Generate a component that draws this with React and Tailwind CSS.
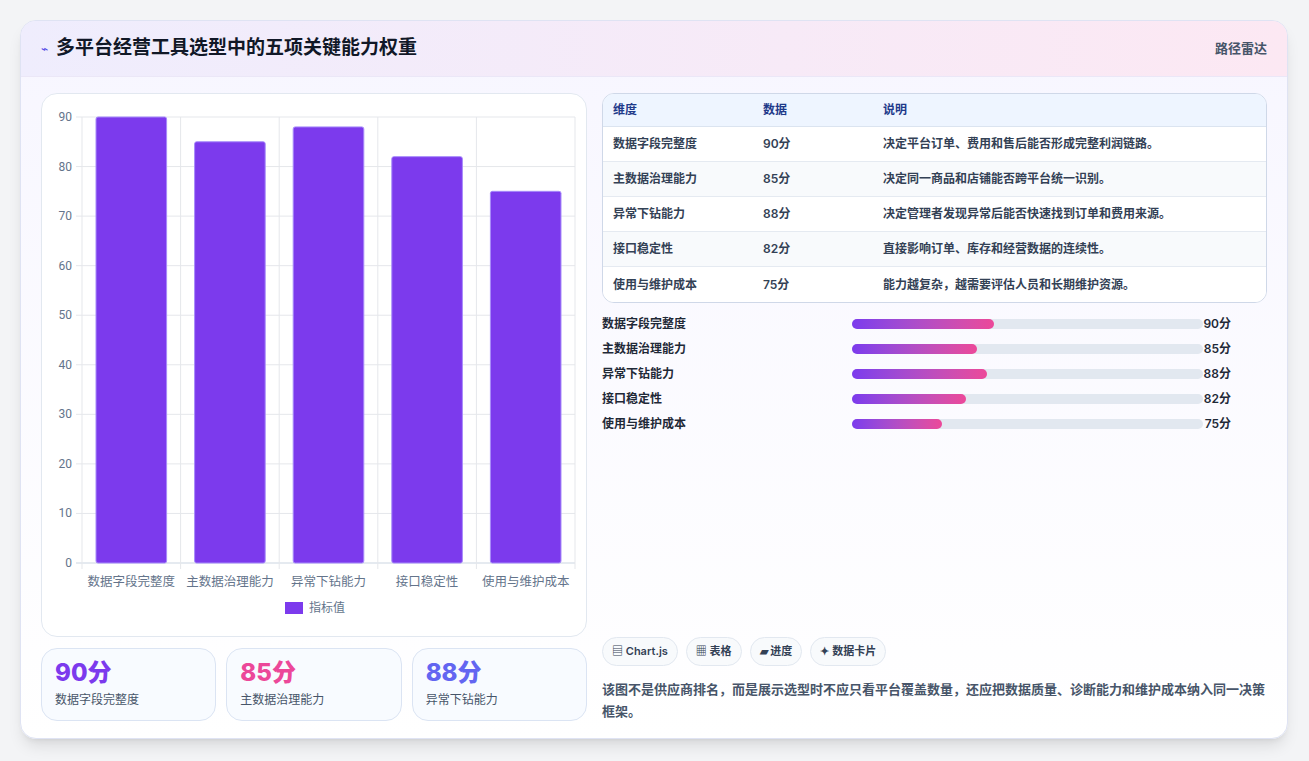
const rows = [
  ['数据字段完整度', 90, '决定平台订单、费用和售后能否形成完整利润链路。'],
  ['主数据治理能力', 85, '决定同一商品和店铺能否跨平台统一识别。'],
  ['异常下钻能力', 88, '决定管理者发现异常后能否快速找到订单和费用来源。'],
  ['接口稳定性', 82, '直接影响订单、库存和经营数据的连续性。'],
  ['使用与维护成本', 75, '能力越复杂，越需要评估人员和长期维护资源。'],
];

function Chart() {
  const x0 = 40, x1 = 533, y0 = 23, y1 = 469;
  const cw = (x1 - x0) / 5;
  const sy = v => y1 - (v / 90) * (y1 - y0);
  return (
    <svg width="546" height="543" className="block" style={{ fontFamily: 'Roboto, "Noto Sans CJK SC", sans-serif' }}>
      {[0, 10, 20, 30, 40, 50, 60, 70, 80, 90].map(t => (
        <g key={t}>
          <line x1={x0 - 6} x2={x1} y1={sy(t)} y2={sy(t)} stroke={t === 0 ? '#cbd5e1' : '#e5e7eb'} />
          <text x={x0 - 10} y={sy(t) + 4} textAnchor="end" fontSize="12" fill="#64748b">{t}</text>
        </g>
      ))}
      {[0, 1, 2, 3, 4, 5].map(i => (
        <line key={i} x1={x0 + i * cw} x2={x0 + i * cw} y1={y0} y2={y1 + 6} stroke="#e5e7eb" />
      ))}
      {rows.map((r, i) => (
        <g key={r[0]}>
          <rect x={x0 + i * cw + 14} y={sy(r[1])} width={cw - 28} height={y1 - sy(r[1])} rx="2" fill="#7c3aed" stroke="#a78bfa" strokeWidth="1" />
          <text x={x0 + i * cw + cw / 2} y={y1 + 23} textAnchor="middle" fontSize="12.5" fill="#64748b">{r[0]}</text>
        </g>
      ))}
      <rect x="243" y="508" width="18" height="12" fill="#7c3aed" />
      <text x="267" y="518" fontSize="12" fill="#64748b">指标值</text>
    </svg>
  );
}

export default function App() {
  return (
    <div className="min-h-screen bg-[#f3f4f6] p-5" style={{ fontFamily: 'Inter, "Noto Sans CJK SC", sans-serif' }}>
      <div className="w-[1268px] h-[719px] rounded-2xl border border-[#dfe3f3] bg-gradient-to-b from-[#f7f6ff] to-white shadow-lg overflow-hidden flex flex-col">
        <div className="h-[56px] flex items-center justify-between px-5 border-b border-[#ebe7f7] bg-gradient-to-r from-[#efedfd] to-[#fce8f3]">
          <div className="flex items-center gap-2">
            <span className="text-[#4f46e5] text-xs">⌁</span>
            <h1 className="text-[19px] font-bold text-[#111827]">多平台经营工具选型中的五项关键能力权重</h1>
          </div>
          <span className="text-[13px] font-semibold text-[#475569]">路径雷达</span>
        </div>
        <div className="flex gap-[15px] px-5 pt-4 pb-4 flex-1">
          <div className="w-[546px] flex flex-col gap-[11px]">
            <div className="h-[544px] rounded-2xl border border-[#e2e8f0] bg-white"><Chart /></div>
            <div className="grid grid-cols-3 gap-[10px]">
              {[['90分', 'text-[#7c3aed]', '数据字段完整度'], ['85分', 'text-[#ec4899]', '主数据治理能力'], ['88分', 'text-[#6366f1]', '异常下钻能力']].map(c => (
                <div key={c[2]} className="h-[73px] rounded-2xl border border-[#dbe4f3] bg-[#f8fbff] px-[13px] pt-2">
                  <div className={`text-[24px] font-extrabold leading-[32px] ${c[1]}`}>{c[0]}</div>
                  <div className="text-[12px] text-[#475569] mt-[2px]">{c[2]}</div>
                </div>
              ))}
            </div>
          </div>
          <div className="flex-1 flex flex-col">
            <div className="rounded-xl border border-[#cfd8e8] overflow-hidden bg-white">
              <div className="h-[33px] flex items-center bg-[#eef5ff] text-[12px] font-bold text-[#1e3a8a] border-b border-[#dbe4f0]">
                <span className="w-[160px] pl-[10px]">维度</span><span className="w-[120px]">数据</span><span>说明</span>
              </div>
              {rows.map((r, i) => (
                <div key={r[0]} className={`h-[35px] flex items-center text-[12px] font-semibold text-[#334155] ${i % 2 ? 'bg-[#f8fafc]' : 'bg-white'} ${i < 4 ? 'border-b border-[#e5eaf1]' : ''}`}>
                  <span className="w-[160px] pl-[10px]">{r[0]}</span><span className="w-[120px]">{r[1]}分</span><span>{r[2]}</span>
                </div>
              ))}
            </div>
            <div className="mt-[12px] flex flex-col gap-[7px] pr-9">
              {rows.map(r => (
                <div key={r[0]} className="h-[18px] flex items-center text-[12px] font-semibold text-[#1f2937]">
                  <span className="w-[250px]">{r[0]}</span>
                  <div className="flex-1 h-[10px] rounded-full bg-[#e2e8f0]">
                    <div className="h-full rounded-full bg-gradient-to-r from-[#7c3aed] to-[#ec4899]" style={{ width: `${r[1] - 49.5}%` }} />
                  </div>
                  <span className="w-[28px] text-right">{r[1]}分</span>
                </div>
              ))}
            </div>
            <div className="mt-auto flex gap-[8px]">
              {['▤ Chart.js', '▦ 表格', '▰ 进度', '✦ 数据卡片'].map(t => (
                <span key={t} className="h-[29px] px-[9px] flex items-center rounded-full border border-[#e2e8f0] bg-[#f8fafc] text-[11px] font-semibold text-[#334155]">{t}</span>
              ))}
            </div>
            <p className="mt-[12px] text-[13px] leading-[22px] font-semibold text-[#475569]">该图不是供应商排名，而是展示选型时不应只看平台覆盖数量，还应把数据质量、诊断能力和维护成本纳入同一决策框架。</p>
          </div>
        </div>
      </div>
    </div>
  );
}
